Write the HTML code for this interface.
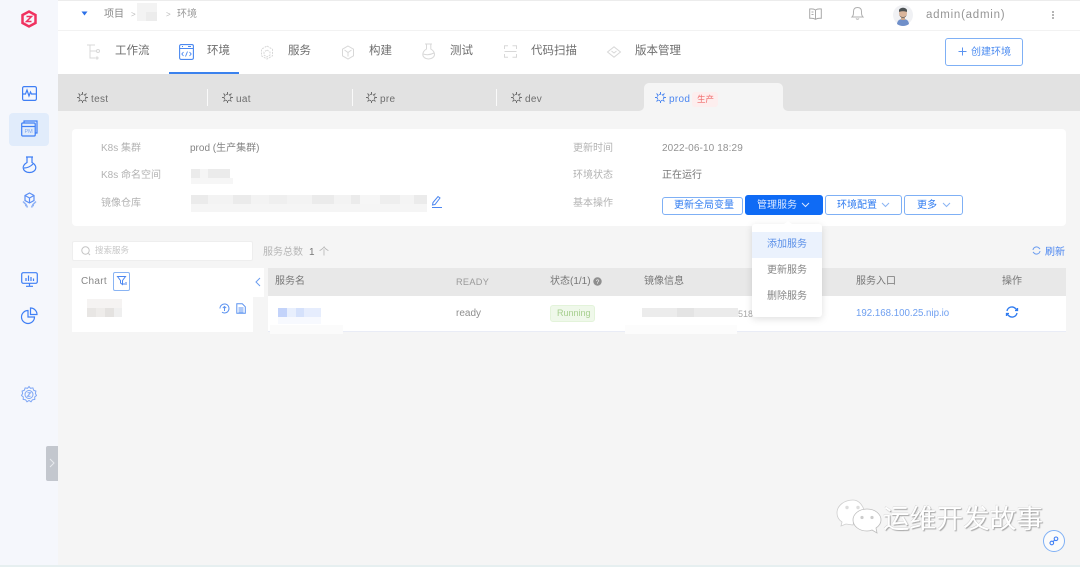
<!DOCTYPE html>
<html lang="zh">
<head>
<meta charset="utf-8">
<title>环境</title>
<style>
html,body{margin:0;padding:0;width:1080px;height:567px;overflow:hidden;background:#f5f5f5}
body{font-family:"Liberation Sans","Noto Sans CJK SC",sans-serif;position:relative}
#w{position:absolute;left:0;top:0;width:1080px;height:567px;overflow:hidden;filter:blur(.3px)}
.a{position:absolute}
.t{position:absolute;white-space:nowrap;line-height:16px;font-size:10px;color:#8a8a8a}
svg{position:absolute;overflow:visible}
.btn{position:absolute;box-sizing:border-box;border:1px solid #7fb0f5;border-radius:3px;background:#fff;color:#2f7bf0;font-size:10px;line-height:19px;height:20px;white-space:nowrap}
.ni{fill:none;stroke:#d8d8d8;stroke-width:1}
.si{fill:none;stroke:#3f7ff5;stroke-width:1.2}
</style>
</head>
<body>
<div id="w">
<!-- sidebar -->
<div class="a" style="left:0;top:0;width:58px;height:567px;background:#f5f7fc"></div>
<div class="a" style="left:0;top:565px;width:1080px;height:2px;background:#e6eff0"></div>
<div class="a" style="left:58px;top:0;width:1022px;height:1px;background:#ececec"></div>

<svg style="left:20px;top:10px" width="18" height="18" viewBox="0 0 18 18"><path d="M9 1.500 15.500 5v8L9 16.500 2.500 13V5z" fill="none" stroke="#f0325f" stroke-width="2.500"/><path d="M6.500 6.500h5L6.500 11.500h5" fill="none" stroke="#f0325f" stroke-width="1.500"/></svg>

<svg class="si" style="left:22px;top:86px" width="15" height="15" viewBox="0 0 15 15"><rect x=".6" y=".6" width="13.800" height="13.800" rx="1.500"/><path d="M1 8h2.500l1.500-4 2 6 1.500-4 1 2h4.500"/></svg>

<div class="a" style="left:9px;top:113px;width:40px;height:33px;border-radius:4px;background:#e1ecfb"></div>
<svg class="si" style="left:21px;top:120px" width="17" height="18" viewBox="0 0 17 18"><path d="M3 2.500V1h13v12h-2"/><rect x=".7" y="3" width="13.500" height="13" rx="1"/><path d="M.7 6.500h13.500"/><text x="3.500" y="13" font-size="5.500" fill="#7ea6ef" stroke="none" font-family="Liberation Sans">PM</text></svg>

<svg class="si" style="left:22px;top:156px" width="15" height="18" viewBox="0 0 15 18"><path d="M4 1h7M5 1.500V6.500C2.500 8 1.200 9.500 1.200 11.500 1.200 14.500 4 16.500 7.500 16.500S13.800 14.500 13.800 11.500C13.800 9.500 12.500 8 10 6.500V1.500"/><path d="M2 12c3 0 6-1 9-4"/></svg>

<svg class="si" style="left:22px;top:192px" width="15" height="17" viewBox="0 0 15 17" stroke-width="1"><path d="M7.500 1 12 3.500v5L7.500 11 3 8.500v-5zM3 3.500l4.500 2.500L12 3.500M7.500 6v5" stroke="#5b8ff5" fill="none"/><path d="M1 9.500l3 3 1.500 3M14 9.500l-3 3-1.500 3M3 13.500h2M10 13.500h2" stroke="#8fb2f5" fill="none" stroke-width="1.500"/></svg>

<svg class="si" style="left:21px;top:272px" width="17" height="15" viewBox="0 0 17 15"><rect x=".7" y=".7" width="15.600" height="10.600" rx="1.500"/><path d="M5 9V6M7.500 9V3.500M10 9V5M12.500 9V6.500M8.500 11.500V14M5 14.300h7"/></svg>

<svg class="si" style="left:21px;top:307px" width="17" height="17" viewBox="0 0 17 17"><path d="M7 3.500A6.500 6.500 0 1 0 13.500 10H7z"/><path d="M9.500 1a6.500 6.500 0 0 1 6.500 6.500H9.500z"/></svg>

<svg style="left:21px;top:386px" width="16" height="17" viewBox="0 0 16 17" fill="none" stroke="#7ea6f5" stroke-width="1"><path d="M8 1l1.500 1.800 2.400-.4.700 2.300 2.300.9-.5 2.400L15.500 10l-1.800 1.500.1 2.400-2.400.4L10 16.300 8 15l-2 1.300-1.400-2-2.400-.4.100-2.400L.5 10l1.100-2-.5-2.400 2.300-.9.700-2.300 2.400.4z" transform="translate(0 -.5)"/><circle cx="8" cy="8.500" r="4"/><path d="M6.500 6.800h3l-3 3.400h3"/></svg>

<div class="a" style="left:46px;top:446px;width:12px;height:35px;background:#c3c7ce;border-radius:2px 0 0 2px"></div>
<svg style="left:49px;top:458px" width="6" height="10" viewBox="0 0 6 10"><path d="M1 1l4 4-4 4" fill="none" stroke="#e8eaee" stroke-width="1"/></svg>

<!-- top bar -->
<div class="a" style="left:58px;top:1px;width:1022px;height:29px;background:#fff"></div>
<div class="a" style="left:58px;top:30px;width:1022px;height:1px;background:#f2f2f2"></div>
<svg style="left:81px;top:11px" width="7" height="5" viewBox="0 0 7 5"><path d="M.5.5h6L3.500 4.500z" fill="#2b70e8"/></svg>
<div class="t" style="left:104px;top:7px">项目</div>
<div class="t" style="left:131px;top:7px;color:#bbb;font-size:8px">&gt;</div>
<div class="a" style="left:137px;top:3px;width:20px;height:18px;background:#f3f3f3"></div>
<div class="a" style="left:146px;top:12px;width:11px;height:9px;background:#ececec"></div>
<div class="t" style="left:166px;top:7px;color:#bbb;font-size:8px">&gt;</div>
<div class="t" style="left:177px;top:7px;color:#999">环境</div>

<svg style="left:809px;top:8px" width="13" height="12" viewBox="0 0 13 12" fill="none" stroke="#a9a9a9"><path d="M6.500 2C5 1 3 .8.700 1v9.300c2.300-.2 4.300 0 5.800 1 1.500-1 3.500-1.200 5.800-1V1C10 .8 8 1 6.500 2zM6.500 2v9M2.500 4h2M2.500 6.500h2"/></svg>
<svg style="left:851px;top:6px" width="13" height="14" viewBox="0 0 13 14" fill="none" stroke="#b0b0b0"><path d="M1 11c1.500-1.500 1.500-3 1.500-5.500C2.500 3 4 1.500 6.500 1.500s4 1.500 4 4c0 2.500 0 4 1.500 5.500zM5 12.500c.8 1 2.200 1 3 0"/></svg>
<svg style="left:893px;top:5px" width="20" height="20" viewBox="0 0 20 20"><circle cx="10" cy="10" r="10" fill="#f0f1f4"/><path d="M4 19c.5-4 3-5 6-5s5.500 1 6 5a10 10 0 0 1-12 0z" fill="#6f8fc9"/><rect x="8" y="11" width="4" height="4" fill="#c9a78f"/><ellipse cx="10" cy="8" rx="4" ry="5" fill="#d9b59c"/><path d="M6 5c1-3 7-3 8 0v2c-2-1-6-1-8 0z" fill="#4c5254"/><path d="M6 9c1 4 7 4 8 0-1 5-7 5-8 0z" fill="#5a5a58"/></svg>
<div class="t" style="left:926px;top:7px;font-size:11.500px;color:#969696;letter-spacing:.75px">admin(admin)</div>
<div class="a" style="left:1052px;top:11px;width:2px;height:2px;background:#b5b5b5"></div>
<div class="a" style="left:1052px;top:14px;width:2px;height:2px;background:#b5b5b5"></div>
<div class="a" style="left:1052px;top:17px;width:2px;height:2px;background:#b5b5b5"></div>

<!-- nav -->
<div class="a" style="left:58px;top:31px;width:1022px;height:43px;background:#fff"></div>
<svg class="ni" style="left:87px;top:44px" width="14" height="15" viewBox="0 0 14 15"><path d="M0 1h8M3 1v13h5M3 7h6"/><circle cx="11" cy="7" r="1.500"/><circle cx="10" cy="14" r="1"/></svg>
<div class="t" style="left:115px;top:43px;font-size:11.500px;color:#6e6e6e">工作流</div>
<svg style="left:179px;top:44px" width="15" height="16" viewBox="0 0 15 16" fill="none" stroke="#4a88f0" stroke-width="1.100"><rect x=".6" y=".6" width="13.800" height="14.800" rx="1.500"/><path d="M.6 4.500h13.800M3 2.500h1M9 2.500h3"/><path d="M4.500 8 2.800 10l1.700 2M10.500 8l1.700 2-1.700 2M8.500 7.500l-2 5" stroke-width=".9"/></svg>
<div class="t" style="left:207px;top:43px;font-size:11.500px;color:#6e6e6e">环境</div>
<div class="a" style="left:169px;top:72px;width:70px;height:2px;background:#3b82ee"></div>
<svg class="ni" style="left:260px;top:45px" width="14" height="15" viewBox="0 0 14 15"><path d="M7 1l5.500 3.200v6.600L7 14l-5.500-3.200V4.200zM7 5l3 2v3l-3 2-3-2V7z" stroke-dasharray="2 1"/></svg>
<div class="t" style="left:288px;top:43px;font-size:11.500px;color:#6e6e6e">服务</div>
<svg class="ni" style="left:341px;top:45px" width="14" height="15" viewBox="0 0 14 15"><path d="M7 1l5.500 3.200v6.600L7 14l-5.500-3.200V4.200zM3.500 5 7 7.500 10.500 5M7 7.500V11.500"/></svg>
<div class="t" style="left:369px;top:43px;font-size:11.500px;color:#6e6e6e">构建</div>
<svg class="ni" style="left:422px;top:43px" width="14" height="17" viewBox="0 0 14 17"><path d="M3 1h7M4.500 1v5C2 7.500.8 9.500.8 11.500c0 2.500 2.500 4.500 5.700 4.500s6-2 6-4.500c0-2-1.200-4-3.700-5.500V1M1 11c3 1 7 1 11-1"/></svg>
<div class="t" style="left:450px;top:43px;font-size:11.500px;color:#6e6e6e">测试</div>
<svg class="ni" style="left:504px;top:45px" width="13" height="13" viewBox="0 0 13 13"><path d="M.5 4V.8h3.500M8.500.8h4V4M.5 9v3.200h3.500M8.500 12.200h4V9M.5 6.500h12"/></svg>
<div class="t" style="left:531px;top:43px;font-size:11.500px;color:#6e6e6e">代码扫描</div>
<svg class="ni" style="left:607px;top:46px" width="14" height="12" viewBox="0 0 14 12"><path d="M7 .8 13.500 6 7 11.200.5 6zM4.500 5 7 7l2.500-2"/></svg>
<div class="t" style="left:635px;top:43px;font-size:11.500px;color:#6e6e6e">版本管理</div>

<div class="a" style="left:945px;top:38px;width:78px;height:28px;box-sizing:border-box;border:1px solid #7fb0f5;border-radius:3px;background:#fff"></div>
<svg style="left:958px;top:47px" width="9" height="9" viewBox="0 0 9 9"><path d="M4.500.5v8M.5 4.500h8" stroke="#5b93f0" fill="none"/></svg>
<div class="t" style="left:971px;top:45px;color:#4b8bf0">创建环境</div>

<!-- tab strip -->
<div class="a" style="left:58px;top:74px;width:1022px;height:37px;background:#e2e2e2"></div>
<div class="a" style="left:644px;top:83px;width:139px;height:28px;background:#f5f5f5;border-radius:5px 5px 0 0"></div>
<div class="a" style="left:634px;top:101px;width:10px;height:10px;background:#f5f5f5"></div>
<div class="a" style="left:634px;top:101px;width:10px;height:10px;background:#e2e2e2;border-radius:0 0 5px 0"></div>
<div class="a" style="left:783px;top:101px;width:10px;height:10px;background:#f5f5f5"></div>
<div class="a" style="left:783px;top:101px;width:10px;height:10px;background:#e2e2e2;border-radius:0 0 0 5px"></div>
<div class="a" style="left:207px;top:89px;width:1px;height:17px;background:#fafafa"></div>
<div class="a" style="left:352px;top:89px;width:1px;height:17px;background:#fafafa"></div>
<div class="a" style="left:496px;top:89px;width:1px;height:17px;background:#fafafa"></div>

<svg style="left:77px;top:92px" width="11" height="11" viewBox="0 0 11 11" fill="none" stroke="#6d6d6d"><circle cx="5.500" cy="5.500" r="3.300" stroke-dasharray="2 .8"/><path d="M5.500 0v2M5.500 9v2M0 5.500h2M9 5.500h2M1.500 1.500l1.500 1.500M8 8l1.500 1.500M1.500 9.500 3 8M8 3l1.500-1.500"/></svg>
<div class="t" style="left:91px;top:92px;color:#6e6e6e;letter-spacing:.3px">test</div>
<svg style="left:222px;top:92px" width="11" height="11" viewBox="0 0 11 11" fill="none" stroke="#6d6d6d"><circle cx="5.500" cy="5.500" r="3.300" stroke-dasharray="2 .8"/><path d="M5.500 0v2M5.500 9v2M0 5.500h2M9 5.500h2M1.500 1.500l1.500 1.500M8 8l1.500 1.500M1.500 9.500 3 8M8 3l1.500-1.500"/></svg>
<div class="t" style="left:236px;top:92px;color:#6e6e6e;letter-spacing:.3px">uat</div>
<svg style="left:366px;top:92px" width="11" height="11" viewBox="0 0 11 11" fill="none" stroke="#6d6d6d"><circle cx="5.500" cy="5.500" r="3.300" stroke-dasharray="2 .8"/><path d="M5.500 0v2M5.500 9v2M0 5.500h2M9 5.500h2M1.500 1.500l1.500 1.500M8 8l1.500 1.500M1.500 9.500 3 8M8 3l1.500-1.500"/></svg>
<div class="t" style="left:380px;top:92px;color:#6e6e6e;letter-spacing:.3px">pre</div>
<svg style="left:511px;top:92px" width="11" height="11" viewBox="0 0 11 11" fill="none" stroke="#6d6d6d"><circle cx="5.500" cy="5.500" r="3.300" stroke-dasharray="2 .8"/><path d="M5.500 0v2M5.500 9v2M0 5.500h2M9 5.500h2M1.500 1.500l1.500 1.500M8 8l1.500 1.500M1.500 9.500 3 8M8 3l1.500-1.500"/></svg>
<div class="t" style="left:525px;top:92px;color:#6e6e6e;letter-spacing:.3px">dev</div>
<svg style="left:655px;top:92px" width="11" height="11" viewBox="0 0 11 11" fill="none" stroke="#4b86f0"><circle cx="5.500" cy="5.500" r="3.300" stroke-dasharray="2 .8"/><path d="M5.500 0v2M5.500 9v2M0 5.500h2M9 5.500h2M1.500 1.500l1.500 1.500M8 8l1.500 1.500M1.500 9.500 3 8M8 3l1.500-1.500"/></svg>
<div class="t" style="left:669px;top:92px;color:#4b86f0;letter-spacing:.3px">prod</div>
<div class="a" style="left:692px;top:92px;width:26px;height:15px;background:#fdeeee;border-radius:3px"></div>
<div class="t" style="left:697px;top:91px;color:#f06a6a;font-size:8.500px">生产</div>

<!-- info card -->
<div class="a" style="left:72px;top:129px;width:994px;height:97px;background:#fff;border-radius:4px"></div>
<div class="t" style="left:101px;top:141px;color:#b3b3b3">K8s 集群</div>
<div class="t" style="left:190px;top:141px;color:#858585">prod (生产集群)</div>
<div class="t" style="left:101px;top:168px;color:#b3b3b3">K8s 命名空间</div>
<div class="t" style="left:101px;top:196px;color:#b3b3b3">镜像仓库</div>
<div class="t" style="left:573px;top:141px;color:#b3b3b3">更新时间</div>
<div class="t" style="left:662px;top:141px;color:#939393;letter-spacing:.12px">2022-06-10 18:29</div>
<div class="t" style="left:573px;top:168px;color:#b3b3b3">环境状态</div>
<div class="t" style="left:662px;top:168px;color:#777">正在运行</div>
<div class="t" style="left:573px;top:196px;color:#b3b3b3">基本操作</div>

<!-- mosaics -->
<svg style="left:0;top:0" width="1080" height="567">
<g fill="#ebebeb">
<rect x="191" y="169" width="9" height="9"/><rect x="200" y="169" width="8" height="9" fill="#f5f5f5"/><rect x="208" y="169" width="22" height="9"/>
<rect x="191" y="178" width="42" height="6" fill="#f6f6f6"/>
<rect x="191" y="195" width="17" height="9"/><rect x="208" y="195" width="25" height="9" fill="#f3f3f3"/><rect x="233" y="195" width="18" height="9"/><rect x="251" y="195" width="18" height="9" fill="#f3f3f3"/><rect x="269" y="195" width="18" height="9" fill="#efefef"/><rect x="287" y="195" width="25" height="9" fill="#f3f3f3"/><rect x="312" y="195" width="22" height="9"/><rect x="334" y="195" width="17" height="9" fill="#f3f3f3"/><rect x="351" y="195" width="9" height="9"/><rect x="360" y="195" width="20" height="9" fill="#f6f6f6"/><rect x="380" y="195" width="20" height="9" fill="#eeeeee"/><rect x="400" y="195" width="14" height="9" fill="#f4f4f4"/><rect x="414" y="195" width="13" height="9" fill="#ebebeb"/>
<rect x="191" y="204" width="236" height="8" fill="#f5f5f5"/>
</g>
</svg>
<svg style="left:431px;top:195px" width="12" height="14" viewBox="0 0 12 14" fill="none" stroke="#4b86f0"><path d="M1.500 10 2 7.500 7 1.500 9 3 4 9.500zM1 12.500h10"/></svg>

<!-- buttons -->
<div class="btn" style="left:662px;top:197px;width:81px;height:18px;line-height:15px;padding-left:11px">更新全局变量</div>
<div class="btn" style="left:745px;top:195px;width:78px;background:#0f6bf5;border-color:#0f6bf5;color:#dbe8ff;padding-left:11px">管理服务</div>
<svg style="left:801px;top:202px" width="9" height="6" viewBox="0 0 9 6"><path d="M1 1l3.500 3.500L8 1" fill="none" stroke="#d9e6ff"/></svg>
<div class="btn" style="left:825px;top:195px;width:77px;padding-left:11px">环境配置</div>
<svg style="left:881px;top:202px" width="9" height="6" viewBox="0 0 9 6"><path d="M1 1l3.500 3.500L8 1" fill="none" stroke="#8ab4f3"/></svg>
<div class="btn" style="left:904px;top:195px;width:59px;padding-left:12px">更多</div>
<svg style="left:942px;top:202px" width="9" height="6" viewBox="0 0 9 6"><path d="M1 1l3.500 3.500L8 1" fill="none" stroke="#8ab4f3"/></svg>

<!-- search row -->
<div class="a" style="left:72px;top:241px;width:181px;height:20px;box-sizing:border-box;background:#fff;border:1px solid #eeeeee;border-radius:2px"></div>
<svg style="left:81px;top:246px" width="10" height="10" viewBox="0 0 10 10" fill="none" stroke="#c5c5c5"><circle cx="4.500" cy="4.500" r="3.700"/><path d="M7.500 7.500 9 9"/></svg>
<div class="t" style="left:95px;top:242px;color:#c8c8c8;font-size:8.500px">搜索服务</div>
<div class="t" style="left:263px;top:245px;color:#b5b5b5">服务总数</div>
<div class="t" style="left:309px;top:245px;color:#777">1</div>
<div class="t" style="left:319px;top:245px;color:#b5b5b5">个</div>
<svg style="left:1032px;top:246px" width="9" height="9" viewBox="0 0 9 9" fill="none" stroke="#6b9df0"><path d="M1 4a3.500 3.500 0 0 1 6-2l1 1M8 5a3.500 3.500 0 0 1-6 2L1 6"/></svg>
<div class="t" style="left:1045px;top:245px;color:#4b86f0">刷新</div>

<!-- left chart panel -->
<div class="a" style="left:72px;top:268px;width:192px;height:29px;background:#fff"></div>
<div class="a" style="left:72px;top:297px;width:181px;height:35px;background:#fff"></div>
<div class="t" style="left:81px;top:274px;color:#888;letter-spacing:.3px">Chart</div>
<div class="a" style="left:113px;top:272px;width:17px;height:19px;box-sizing:border-box;border:1px solid #8ab4f3;border-radius:2px"></div>
<svg style="left:117px;top:276px" width="10" height="10" viewBox="0 0 10 10" fill="none" stroke="#4b86f0"><path d="M.5.5h8L5.500 4.500v4L3.500 7V4.500z"/><path d="M7 7v2M9 6v3" stroke-width="1"/></svg>
<svg style="left:255px;top:277px" width="6" height="10" viewBox="0 0 6 10"><path d="M5 1 1 5l4 4" fill="none" stroke="#6b9df0"/></svg>
<svg style="left:0;top:0" width="1080" height="567">
<rect x="87" y="299" width="35" height="9" fill="#f5f3f2"/>
<rect x="87" y="308" width="9" height="9" fill="#e8e6e4"/><rect x="96" y="308" width="9" height="9" fill="#eeecea"/><rect x="105" y="308" width="9" height="9" fill="#e4e2e0"/><rect x="114" y="308" width="8" height="9" fill="#efefef"/>
</svg>
<svg style="left:219px;top:303px" width="11" height="11" viewBox="0 0 11 11" fill="none" stroke="#5c93f0"><path d="M1 5.500a4.500 4.500 0 1 1 2 3.700M5.500 8V3.500M3.800 5l1.700-1.500L7.200 5"/></svg>
<svg style="left:236px;top:303px" width="10" height="11" viewBox="0 0 10 11" fill="none" stroke="#5c93f0"><path d="M.8.800h5.500l3 3v6.400H.8zM2.500 5h5M2.500 7h5M2.500 9h5"/></svg>

<!-- table -->
<div class="a" style="left:268px;top:268px;width:798px;height:28px;background:#e8e8e8"></div>
<div class="a" style="left:268px;top:296px;width:798px;height:35px;background:#fff"></div>
<div class="a" style="left:268px;top:331px;width:798px;height:1px;background:#e9ecf6"></div>
<div class="a" style="left:270px;top:325px;width:73px;height:9px;background:#fbfbfb"></div>
<div class="a" style="left:625px;top:325px;width:112px;height:9px;background:#fcfcfc"></div>
<div class="t" style="left:275px;top:274px;color:#777">服务名</div>
<div class="t" style="left:456px;top:274px;color:#9a9a9a;font-size:9.200px;letter-spacing:.3px">READY</div>
<div class="t" style="left:550px;top:274px;color:#777">状态(1/1)</div>
<svg style="left:593px;top:277px" width="9" height="9" viewBox="0 0 9 9"><circle cx="4.500" cy="4.500" r="4.200" fill="#8f8f8f"/><text x="2.800" y="7" font-size="6.500" fill="#fff" font-family="Liberation Sans">?</text></svg>
<div class="t" style="left:644px;top:274px;color:#777">镜像信息</div>
<div class="t" style="left:856px;top:274px;color:#777">服务入口</div>
<div class="t" style="left:1002px;top:274px;color:#777">操作</div>

<svg style="left:0;top:0" width="1080" height="567">
<rect x="278" y="308" width="9" height="9" fill="#c3d3fa"/><rect x="287" y="308" width="9" height="9" fill="#e8effd"/><rect x="296" y="308" width="8" height="9" fill="#d5e1fb"/><rect x="304" y="308" width="17" height="9" fill="#e6edfd"/>
<rect x="278" y="317" width="43" height="7" fill="#f7f9fe"/>
<rect x="642" y="308" width="35" height="9" fill="#ececec"/><rect x="677" y="308" width="17" height="9" fill="#e4e4e4"/><rect x="694" y="308" width="44" height="9" fill="#ebebeb"/>
</svg>
<div class="t" style="left:456px;top:306px;color:#8e8e8e">ready</div>
<div class="a" style="left:550px;top:305px;width:45px;height:17px;box-sizing:border-box;background:#eff8ea;border:1px solid #e3f3da;border-radius:3px"></div>
<div class="t" style="left:557px;top:305px;color:#a6cf8e;font-size:9px">Running</div>
<div class="t" style="left:738px;top:306px;color:#a8a8a8;font-size:9px">518</div>
<div class="t" style="left:856px;top:306px;color:#6e9ff0;font-size:9.700px">192.168.100.25.nip.io</div>
<svg style="left:1006px;top:306px" width="12" height="12" viewBox="0 0 12 12" fill="none" stroke="#2f7bf0" stroke-width="1.300"><path d="M1 5a5 5 0 0 1 8.500-2.500L11 4M11 7a5 5 0 0 1-8.500 2.500L1 8M9 4.500h2.500V2M3 7.500H.5V10"/></svg>

<!-- dropdown -->
<div class="a" style="left:752px;top:224px;width:70px;height:93px;background:#fff;border-radius:3px;box-shadow:0 2px 8px rgba(0,0,0,.13)"></div>
<div class="a" style="left:784px;top:221px;width:0;height:0;border-left:4px solid transparent;border-right:4px solid transparent;border-bottom:3px solid #fff"></div>
<div class="a" style="left:752px;top:232px;width:70px;height:26px;background:#ebf2fd"></div>
<div class="t" style="left:767px;top:237px;color:#5a8fe8">添加服务</div>
<div class="t" style="left:767px;top:263px;color:#858585">更新服务</div>
<div class="t" style="left:767px;top:289px;color:#858585">删除服务</div>

<!-- watermark -->
<svg style="left:836px;top:498px" width="46" height="40" viewBox="0 0 46 40">
<path d="M17 2C9 2 1 7 1 15c0 4 2 7 5 9l-1 4 5-2 7 1c1-7 8-12 12-11C28 8 23 2 17 2z" fill="#fff" stroke="#cfcfcf" stroke-width=".8"/>
<circle cx="11" cy="9.500" r="1.700" fill="#ddd"/><circle cx="22" cy="9.500" r="1.700" fill="#ddd"/>
<path d="M31 11c-8 0-14 5-14 11s6 11 14 11c2 0 3 0 5-1l5 3-1-5c3-2 5-5 5-8 0-6-6-11-14-11z" fill="#fff" stroke="#bdbdbd" stroke-width=".8"/>
<circle cx="26" cy="19.500" r="1.600" fill="#ccc"/><circle cx="36" cy="19.500" r="1.600" fill="#ccc"/>
</svg>
<div class="t" style="left:883px;top:503px;height:32px;line-height:32px;font-size:26.700px;color:#fff;text-shadow:1px 1px 1px #a5a5a5,-.3px -.3px 0 #d2d2d2">运维开发故事</div>

<div class="a" style="left:1043px;top:530px;width:22px;height:22px;box-sizing:border-box;border:1px solid #7fb0f5;border-radius:50%;background:#fbfbfb"></div>
<svg style="left:1049px;top:536px" width="10" height="10" viewBox="0 0 10 10" fill="none" stroke="#3f7ff5" stroke-width="1.100"><circle cx="2.800" cy="7" r="1.800"/><circle cx="7" cy="2.800" r="1.800"/><path d="M4 5.700 5.700 4"/></svg>
</div>
</body>
</html>
